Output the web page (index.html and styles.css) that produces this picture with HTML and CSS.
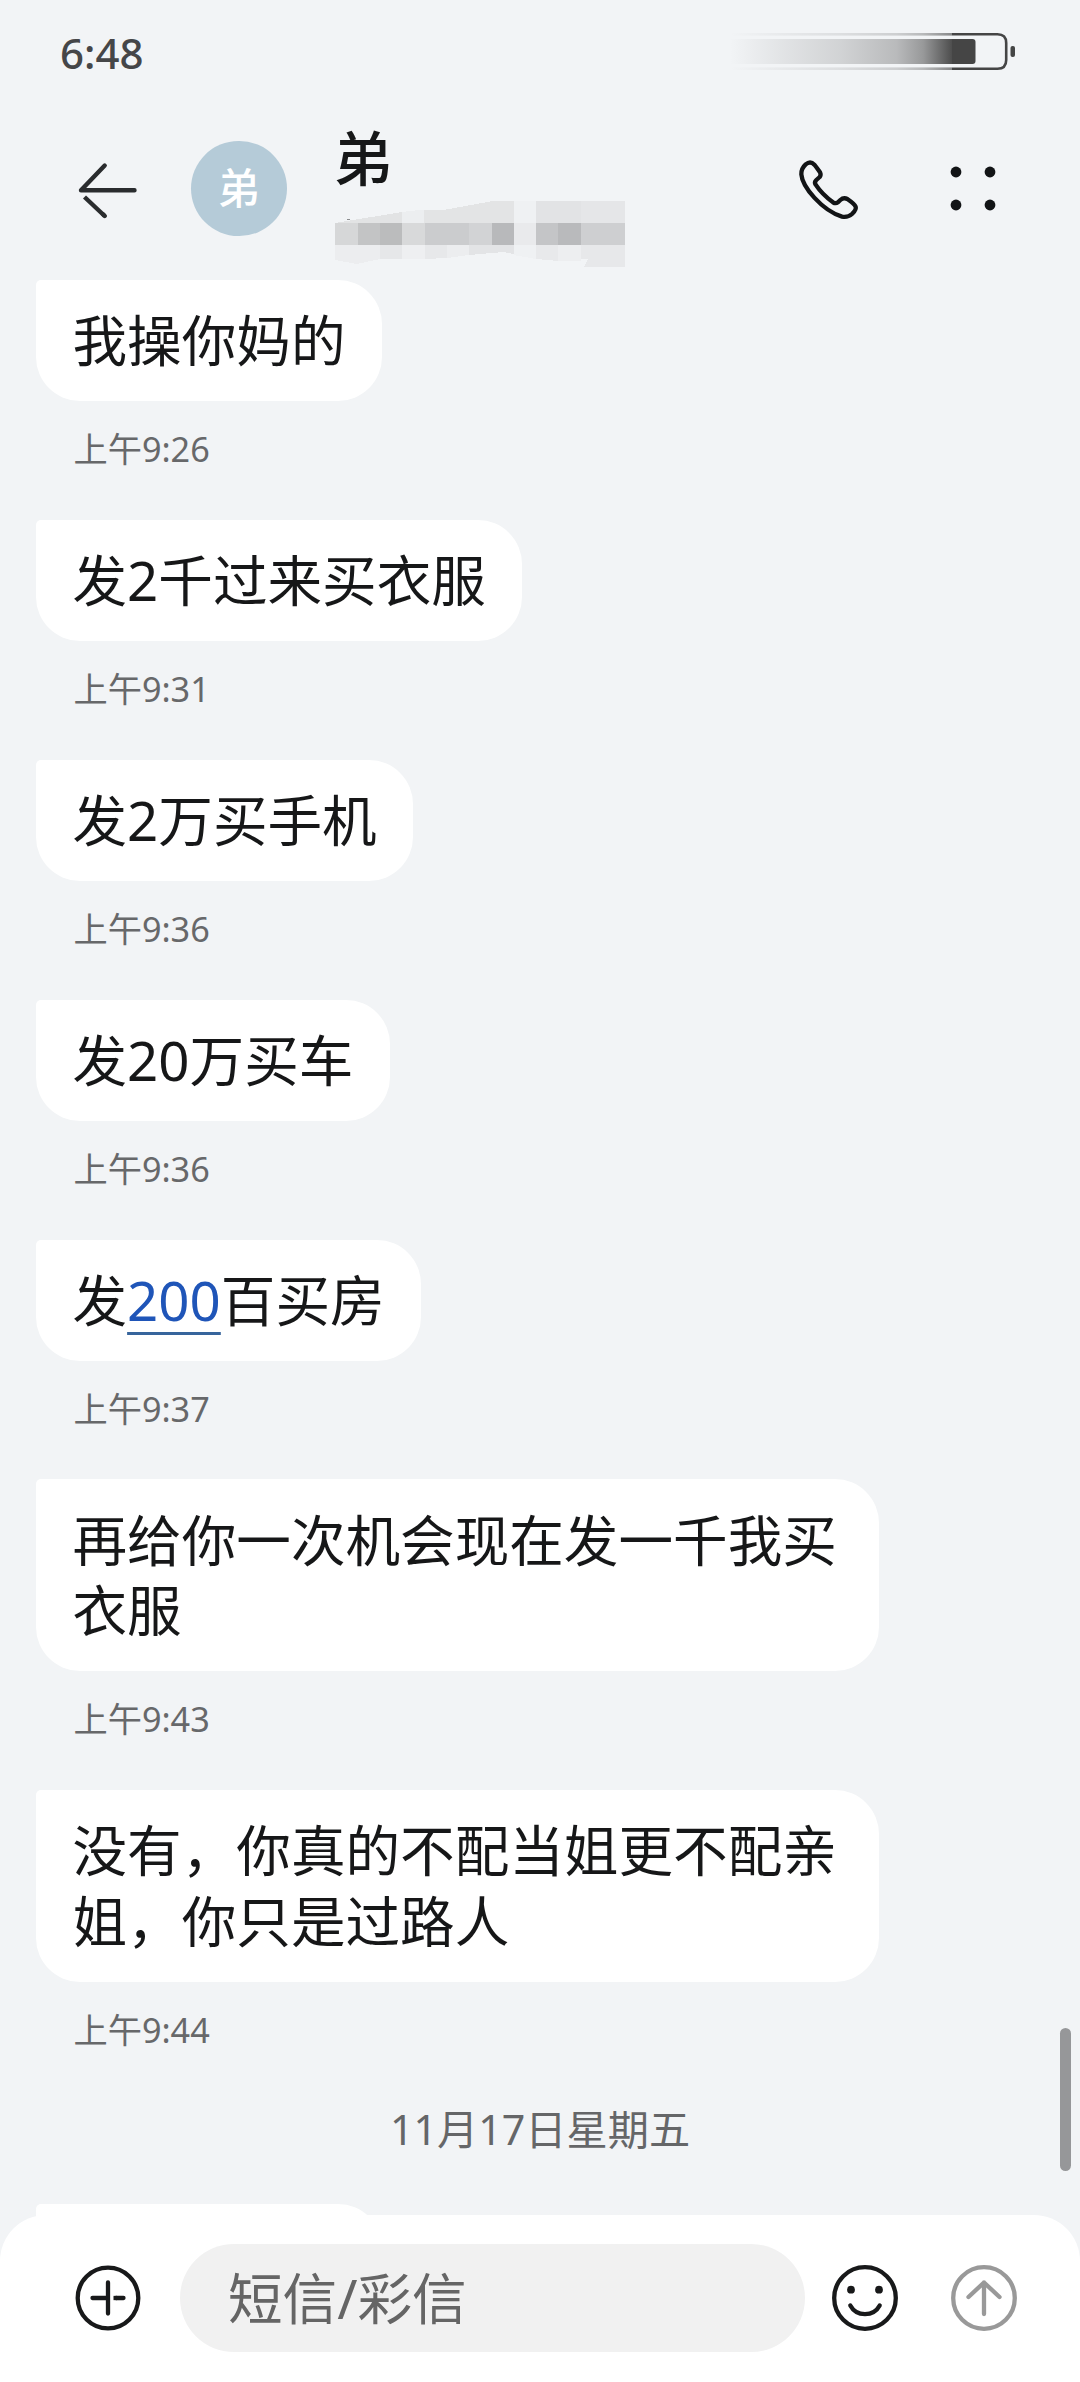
FILE: index.html
```html
<!DOCTYPE html>
<html lang="zh-CN">
<head>
<meta charset="utf-8">
<title>弟</title>
<link rel="stylesheet" href="styles.css">
</head>
<body>
<div class="screen">
  <div class="status-bar">
    <span class="clock">6:48</span>
    <svg class="battery" width="286" height="42" viewBox="0 0 286 42">
      <defs>
        <linearGradient id="fade" x1="0" y1="0" x2="1" y2="0">
          <stop offset="0" stop-color="#454545" stop-opacity="0"/>
          <stop offset=".25" stop-color="#454545" stop-opacity=".1"/>
          <stop offset=".5" stop-color="#454545" stop-opacity=".19"/>
          <stop offset=".75" stop-color="#454545" stop-opacity=".33"/>
          <stop offset=".87" stop-color="#454545" stop-opacity=".52"/>
          <stop offset="1" stop-color="#454545" stop-opacity=".95"/>
        </linearGradient>
      </defs>
      <rect x="0" y="9" width="222" height="25" fill="url(#fade)"/>
      <rect x="0" y="3" width="222" height="2.6" fill="url(#fade)" opacity=".65"/>
      <rect x="0" y="37.4" width="222" height="2.6" fill="url(#fade)" opacity=".65"/>
      <path d="M222 9h20.500q3 0 3 3v19q0 3-3 3h-20.500z" fill="#454545"/>
      <path d="M222 4.300h45.500q8.700 0 8.700 8.700v17q0 8.700-8.700 8.700h-45.500" fill="none" stroke="#454545" stroke-width="2.600"/>
      <rect x="280.500" y="16" width="4.500" height="11" rx="2" fill="#454545"/>
    </svg>
  </div>

  <header class="header">
    <svg class="back" width="64" height="60" viewBox="0 0 64 60" fill="none" stroke="#2a2c2e" stroke-width="4.400" stroke-linecap="round" stroke-linejoin="round">
      <path d="M58.500 31.200H5L28.700 6.500"/>
      <path d="M8.500 38L28.700 57" stroke-linecap="butt"/>
      <path d="M27 55.300L28.700 57"/>
    </svg>
    <div class="avatar">弟</div>
    <div class="contact">
      <h1 class="name">弟</h1>
      <svg class="number" width="292" height="72" viewBox="0 0 292 72" shape-rendering="crispEdges">
        <path d="M0 23L67 12V23z" fill="#e2e3e4"/>
        <path d="M67 12l22-2.500V23H67z" fill="#eceef0"/>
        <path d="M89 9.500h22L160 .7h18.500V23H89z" fill="#e3e4e5"/>
        <path d="M178.500 .7H201V23h-22.500z" fill="#eff1f3"/>
        <path d="M201 .7h44.500V23H201z" fill="#e2e3e5"/>
        <path d="M245.500 .7H290V23h-44.500z" fill="#e5e6e8"/>
        <path d="M0 23h22.500v22H0z" fill="#d6d7d8"/>
        <path d="M22.500 23H45v22H22.500z" fill="#c3c4c5"/>
        <path d="M45 23h22v22H45z" fill="#bbbcbd"/>
        <path d="M67 23h22.500v22H67z" fill="#d8d9da"/>
        <path d="M89.500 23H134v22H89.500z" fill="#cbccce"/>
        <path d="M134 23h22.500v22H134z" fill="#d2d3d5"/>
        <path d="M156.500 23h22v22h-22z" fill="#b8b9bb"/>
        <path d="M178.500 23H201v22h-22.500z" fill="#e9eaec"/>
        <path d="M201 23h22v22h-22z" fill="#c4c5c7"/>
        <path d="M223 23h22.500v22H223z" fill="#b9babc"/>
        <path d="M245.500 23H290v22h-44.500z" fill="#cecfd1"/>
        <path d="M0 45h45v14l-23 5-22-4z" fill="#ecedef"/>
        <path d="M45 45h22v14H45z" fill="#e6e7e9"/>
        <path d="M67 45h22.500v14H67z" fill="#eeeff1"/>
        <path d="M89.500 45H112v13l-22.500 1z" fill="#e7e8ea"/>
        <path d="M112 45h22v10l-22 3z" fill="#ecedef"/>
        <path d="M134 45h44.500v9l-10-2-34.500 3z" fill="#e3e4e6"/>
        <path d="M178.500 45H201v14l-22.500-4z" fill="#eff1f3"/>
        <path d="M201 45h22v16l-22-2z" fill="#e8e9eb"/>
        <path d="M223 45h22.500v16H223z" fill="#edeef0"/>
        <path d="M245.500 45H290v22h-41l4-8h-7.500z" fill="#e7e8ea"/>
        <path d="M12 19h3v1h-3z" fill="#8b8c8e"/>
      </svg>
    </div>
    <svg class="call" width="64" height="64" viewBox="50 410 192 192" fill="none" stroke="#121416" stroke-width="13" stroke-linejoin="round">
      <path d="M76 432Q62 445 63 462C66 500 125 570 185 589Q203 592 215 581Q229 567 226 559Q223 551 201 536Q190 530 180 539L173 546Q166 551 158 546Q125 522 106 493Q101 486 108 479L118 470Q123 464 119 456Q108 440 102 433Q90 420 76 432Z"/>
    </svg>
    <svg class="more" width="48" height="48" viewBox="0 0 48 48" fill="#121416">
      <circle cx="7" cy="7" r="5.400"/><circle cx="41" cy="7" r="5.400"/>
      <circle cx="7" cy="40" r="5.400"/><circle cx="41" cy="40" r="5.400"/>
    </svg>
  </header>

  <main class="thread">
    <div class="message"><p class="bubble">我操你妈的</p><time class="time">上午9:26</time></div>
    <div class="message"><p class="bubble">发2千过来买衣服</p><time class="time">上午9:31</time></div>
    <div class="message"><p class="bubble">发2万买手机</p><time class="time">上午9:36</time></div>
    <div class="message"><p class="bubble">发20万买车</p><time class="time">上午9:36</time></div>
    <div class="message"><p class="bubble">发<a class="link">200</a>百买房</p><time class="time">上午9:37</time></div>
    <div class="message"><p class="bubble">再给你一次机会现在发一千我买衣服</p><time class="time">上午9:43</time></div>
    <div class="message"><p class="bubble">没有，你真的不配当姐更不配亲姐，你只是过路人</p><time class="time">上午9:44</time></div>
    <div class="date">11月17日星期五</div>
    <div class="message"><p class="bubble bubble-partial"></p></div>
  </main>

  <div class="scrollbar"></div>

  <footer class="composer">
    <svg class="icon" width="68" height="68" viewBox="0 0 68 68" fill="none" stroke="#18191a" stroke-width="4.300" stroke-linecap="round">
      <circle cx="34" cy="34" r="30.300"/>
      <path d="M34 18.500v31M18.500 34H34M42 34h7.500"/>
      <path d="M39.500 34H43" stroke-linecap="butt"/>
    </svg>
    <div class="input">短信/彩信</div>
    <svg class="icon emoji" width="68" height="68" viewBox="0 0 68 68" fill="none" stroke="#18191a" stroke-width="4.300" stroke-linecap="round">
      <circle cx="34" cy="34" r="30.800"/>
      <circle cx="20" cy="25.700" r="3.900" fill="#18191a" stroke="none"/>
      <circle cx="48" cy="25.700" r="3.900" fill="#18191a" stroke="none"/>
      <path d="M19.300 41.500C25.500 53 42.500 53 48.700 41.500"/>
    </svg>
    <svg class="icon send" width="68" height="68" viewBox="0 0 68 68" fill="none" stroke="#999" stroke-width="4.300" stroke-linecap="round" stroke-linejoin="round">
      <circle cx="34" cy="34" r="30.800"/>
      <path d="M34 50V18.500M18.500 33L34 18.500L49.500 33"/>
    </svg>
  </footer>
</div>
</body>
</html>
```
FILE: styles.css
```css
* { box-sizing: border-box; margin: 0; padding: 0; }

body {
  width: 1080px;
  height: 2382px;
  overflow: hidden;
  background: #f2f4f6;
  font-family: "Noto Sans", "Noto Sans CJK SC", sans-serif;
  color: #161718;
}

svg { display: block; flex: none; }

.screen {
  position: relative;
  display: flex;
  flex-direction: column;
  width: 1080px;
  height: 2382px;
  overflow: hidden;
}

.status-bar {
  display: flex;
  justify-content: space-between;
  align-items: flex-start;
  height: 100px;
  padding: 30px 64px 0 60px;
}

.clock {
  font-size: 42px;
  font-weight: 500;
  line-height: 46px;
  color: #454648;
}

.header {
  display: flex;
  align-items: flex-start;
  height: 180px;
  padding-left: 76px;
}

.back { margin-top: 58.5px; }

.avatar {
  width: 95.5px;
  height: 95.5px;
  margin: 40.5px 0 0 51px;
  border-radius: 50%;
  background: #b5cbd8;
  color: #fff;
  font-size: 42px;
  font-weight: 500;
  line-height: 94px;
  text-align: center;
}

.contact {
  width: 292px;
  margin: 18px 0 0 48px;
}

.name {
  height: 82px;
  margin-left: -1px;
  font-size: 59px;
  font-weight: 500;
  line-height: 80px;
}

.call { margin: 56.5px 0 0 170px; }
.more { margin: 65px 0 0 88px; }

.thread {
  display: flex;
  flex-direction: column;
  padding-left: 36px;
}

.message {
  display: flex;
  flex-direction: column;
  align-items: flex-start;
  gap: 24.3px;
  margin-bottom: 46.6px;
}

.bubble {
  max-width: 843px;
  padding: 25.3px 36.5px 25px;
  border-radius: 5px 44px 44px 44px;
  background: #fff;
  font-size: 54.6px;
  line-height: 70.7px;
}

.bubble-partial {
  width: 346px;
  height: 121px;
}

.link {
  color: #1f55b8;
  text-decoration: underline;
  text-decoration-color: #37659c;
  text-decoration-thickness: 3px;
  text-underline-offset: 11px;
}

.time {
  margin-left: 37.5px;
  font-size: 34.2px;
  line-height: 48px;
  color: #67686a;
}

.date {
  margin: 0 0 47px -36px;
  font-size: 41.2px;
  line-height: 56px;
  text-align: center;
  color: #656668;
}

.scrollbar {
  position: absolute;
  top: 2028px;
  right: 9px;
  width: 11px;
  height: 143px;
  border-radius: 6px;
  background: #969799;
}

.composer {
  position: absolute;
  left: 0;
  right: 0;
  bottom: 0;
  display: flex;
  align-items: flex-start;
  height: 167.5px;
  padding: 29.5px 0 0 73.5px;
  border-radius: 46px 46px 0 0;
  background: #fff;
}

.icon { margin-top: 20px; }

.input {
  width: 625.5px;
  height: 108px;
  margin-left: 38px;
  padding-left: 48.5px;
  border-radius: 54px;
  background: #f1f1f1;
  color: #656565;
  font-size: 54.6px;
  line-height: 109px;
}

.emoji { margin-left: 26px; }
.send { margin-left: 51.2px; }
```
